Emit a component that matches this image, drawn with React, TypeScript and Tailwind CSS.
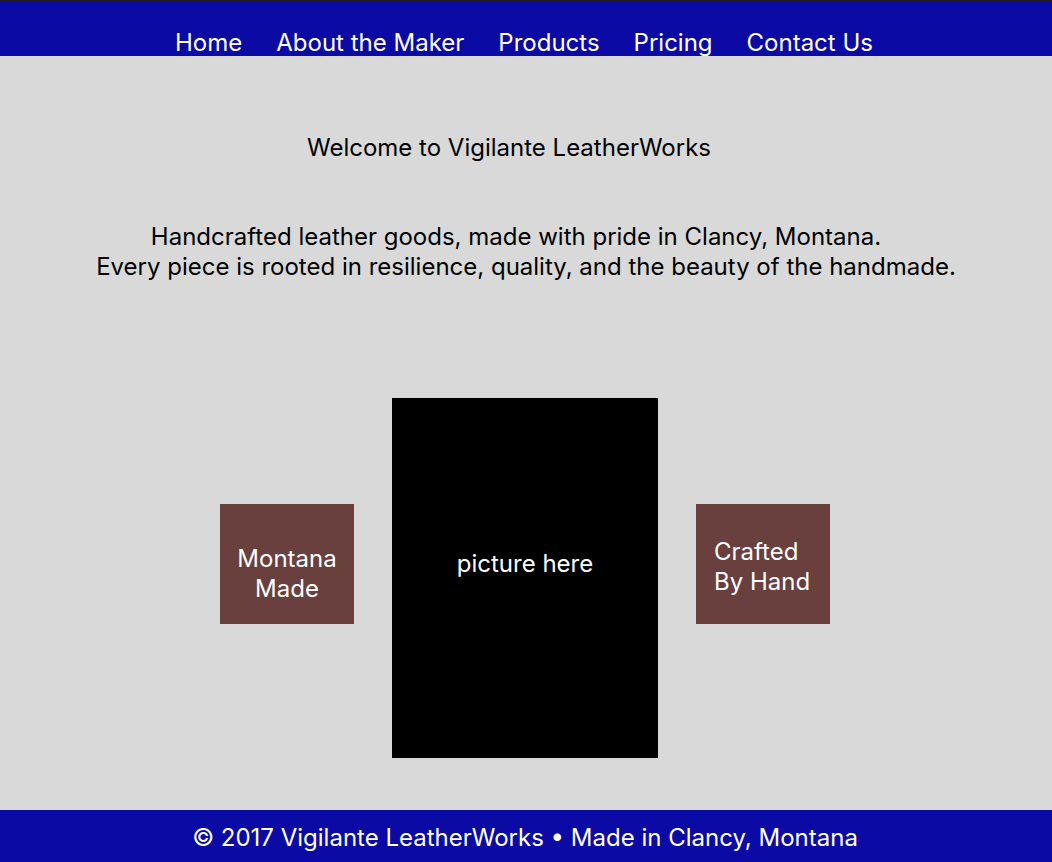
import React from "react";

const navItems = ["Home", "About the Maker", "Products", "Pricing", "Contact Us"];

export default function App() {
  return (
    <div
      className="min-h-screen flex flex-col bg-[#d9d9d9] text-black"
      style={{ fontFamily: "Inter, 'Noto Sans', sans-serif" }}
    >
      {/* top strip + nav */}
      <div className="h-[2px] bg-[#1e1e1e]" />
      <header className="h-[54px] bg-[#0c0aa5] flex items-end justify-center gap-[34px] pr-[4px] text-[24px] leading-[26px] text-white">
        {navItems.map((item) => (
          <a key={item} href="#" className="block">
            {item}
          </a>
        ))}
      </header>

      <main className="flex-1 flex flex-col items-center">
        <h1 className="mt-[77px] pr-[34px] text-[24px] leading-[30px] font-normal">
          Welcome to Vigilante LeatherWorks
        </h1>

        <div className="mt-[59px] text-center text-[24px] leading-[30px]">
          <div className="pr-[20px]">Handcrafted leather goods, made with pride in Clancy, Montana.</div>
          <div>Every piece is rooted in resilience, quality, and the beauty of the handmade.</div>
        </div>

        <div className="mt-[116px] mr-[2px] flex items-start gap-[38px]">
          <div className="mt-[106px] w-[134px] h-[120px] bg-[#6a403f] text-white text-[24px] leading-[30px] flex items-center justify-center text-center pt-[20px]">
            Montana
            <br />
            Made
          </div>
          <div className="w-[266px] h-[360px] bg-black text-white text-[24px] leading-[30px] flex items-center justify-center pb-[28px]">
            picture here
          </div>
          <div className="mt-[106px] w-[134px] h-[120px] bg-[#6a403f] text-white text-[24px] leading-[30px] flex items-center pl-[18px] pt-[6px]">
            Crafted
            <br />
            By Hand
          </div>
        </div>
      </main>

      <footer className="h-[52px] bg-[#0c0aa5] text-white text-[24px] leading-[30px] flex items-center justify-center pt-[4px] pr-[2px]">
        © 2017 Vigilante LeatherWorks • Made in Clancy, Montana
      </footer>
    </div>
  );
}
